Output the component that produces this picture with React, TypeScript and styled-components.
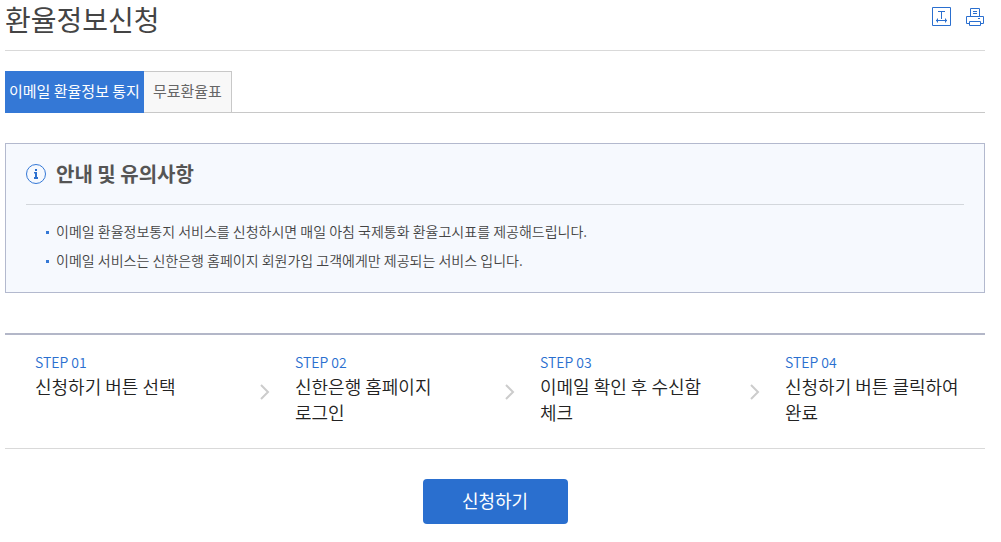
import React from "react";
import styled, { createGlobalStyle } from "styled-components";

const GlobalStyle = createGlobalStyle`
  *, *::before, *::after { box-sizing: border-box; }
  body {
    margin: 0;
    background: #fff;
    color: #222;
    font-family: "Noto Sans CJK KR", "Noto Sans", sans-serif;
    font-size: 14px;
  }
  h1, h2, p, ul, ol { margin: 0; padding: 0; }
  ul, ol { list-style: none; }
`;

const Page = styled.main`
  padding: 0 16px 18px 5px;
`;

const Header = styled.header`
  display: flex;
  justify-content: space-between;
  align-items: flex-start;
  height: 51px;
  border-bottom: 1px solid #d9d9d9;
`;

const Title = styled.h1`
  color: #444;
  font-size: 28px;
  font-weight: 400;
  line-height: 38px;
`;

const Tools = styled.div`
  display: flex;
  gap: 15px;
  padding-top: 7px;
`;

const ToolButton = styled.button`
  display: block;
  padding: 0;
  border: 0;
  background: none;
  cursor: pointer;

  svg { display: block; }
`;

const Tabs = styled.nav`
  display: flex;
  margin-top: 20px;
  height: 42px;
  border-bottom: 1px solid #c8c8c8;
`;

const Tab = styled.a<{ $active?: boolean }>`
  height: 42px;
  padding: ${(p) => (p.$active ? "0 4px" : "0 9px")};
  border: 1px solid ${(p) => (p.$active ? "#3478d6" : "#c8c8c8")};
  border-width: ${(p) => (p.$active ? "1px 0" : "1px 1px 1px 0")};
  background: ${(p) => (p.$active ? "#3478d6" : "#f8f8f8")};
  color: ${(p) => (p.$active ? "#fff" : "#666")};
  font-size: 15px;
  line-height: 38px;
  text-decoration: none;
  white-space: nowrap;
`;

const Notice = styled.section`
  margin-top: 30px;
  padding: 0 20px 17px;
  border: 1px solid #b3b9ce;
  background: #f6f9fe;
`;

const NoticeHead = styled.div`
  display: flex;
  align-items: center;
  gap: 10px;
  height: 61px;
  border-bottom: 1px solid #d3d7dc;
`;

const NoticeTitle = styled.h2`
  color: #555;
  font-size: 20px;
  font-weight: 700;
  line-height: 30px;
`;

const NoticeList = styled.ul`
  padding: 12px 0 0 20px;
`;

const NoticeItem = styled.li`
  display: flex;
  align-items: center;
  gap: 7px;
  color: #444;
  font-size: 14px;
  font-weight: 350;
  line-height: 29px;

  &::before {
    content: "";
    width: 3px;
    height: 3px;
    margin-top: 2px;
    background: #3478d6;
  }
`;

const Steps = styled.ol`
  display: grid;
  grid-template-columns: repeat(4, 1fr);
  margin-top: 40px;
  min-height: 116px;
  border-top: 2px solid #b3b7c8;
  border-bottom: 1px solid #d9d9d9;
`;

const Step = styled.li`
  display: flex;
  gap: 25px;
  padding: 16px 0 20px 10px;

  &:first-child { padding-left: 30px; }
`;

const Arrow = styled.svg`
  flex: none;
  margin-top: 32px;
`;

const StepNumber = styled.p`
  color: #2a6fcf;
  font-size: 14px;
  font-weight: 350;
  line-height: 22px;
`;

const StepText = styled.p`
  font-size: 18px;
  font-weight: 350;
  line-height: 26px;
`;

const Actions = styled.div`
  display: flex;
  justify-content: center;
  margin-top: 30px;
`;

const ApplyButton = styled.button`
  width: 145px;
  height: 45px;
  padding: 0 0 3px;
  border: 0;
  border-radius: 4px;
  background: #2a6fcf;
  color: #fff;
  font-family: inherit;
  font-size: 18px;
  line-height: 42px;
  cursor: pointer;
`;

const steps = [
  ["신청하기 버튼 선택"],
  ["신한은행 홈페이지", "로그인"],
  ["이메일 확인 후 수신함", "체크"],
  ["신청하기 버튼 클릭하여", "완료"],
];

const notices = [
  "이메일 환율정보통지 서비스를 신청하시면 매일 아침 국제통화 환율고시표를 제공해드립니다.",
  "이메일 서비스는 신한은행 홈페이지 회원가입 고객에게만 제공되는 서비스 입니다.",
];

const TextSizeIcon = () => (
  <svg width="19" height="19" viewBox="0 0 19 19" fill="none" stroke="#2a6fcf" aria-hidden="true">
    <path d="M.5 .5h18v18H.5zM6 4.5h7M9.5 4.5V12M4 13.5h11" />
    <path d="M5.5 11.5v4M13.5 11.5v4" />
    <path d="M4.5 12.5v2M14.5 12.5v2" opacity=".45" />
  </svg>
);

const PrintIcon = () => (
  <svg width="19" height="19" viewBox="0 0 19 19" fill="none" stroke="#2a6fcf" aria-hidden="true">
    <path d="M4.5 9V1.500h9V9M7 4.500h4M7 6.500h4" />
    <path d="M3.500 16.500h-3v-7h17v7h-3M12 11.500h2M3.500 14.500h11v4h-11z" />
  </svg>
);

const InfoIcon = () => (
  <svg width="20" height="20" viewBox="0 0 20 20" fill="none" aria-hidden="true">
    <circle cx="10" cy="10" r="9.5" stroke="#3478d6" />
    <path d="M9 5h2v2H9zM8 8h3v5h1v2H8v-2h1V9.500H8z" fill="#2a6fcf" />
  </svg>
);

export default function App() {
  return (
    <>
      <GlobalStyle />
      <Page>
        <Header>
          <Title>환율정보신청</Title>
          <Tools>
            <ToolButton type="button" aria-label="글자 크기">
              <TextSizeIcon />
            </ToolButton>
            <ToolButton type="button" aria-label="인쇄">
              <PrintIcon />
            </ToolButton>
          </Tools>
        </Header>

        <Tabs>
          <Tab href="#email" $active aria-current="page">이메일 환율정보 통지</Tab>
          <Tab href="#table">무료환율표</Tab>
        </Tabs>

        <Notice>
          <NoticeHead>
            <InfoIcon />
            <NoticeTitle>안내 및 유의사항</NoticeTitle>
          </NoticeHead>
          <NoticeList>
            {notices.map((text) => (
              <NoticeItem key={text}>{text}</NoticeItem>
            ))}
          </NoticeList>
        </Notice>

        <Steps>
          {steps.map((lines, i) => (
            <Step key={i}>
              {i > 0 && (
                <Arrow width="10" height="18" viewBox="0 0 10 18" fill="none" aria-hidden="true">
                  <path d="M1 2l7 7-7 7" stroke="#ccc" strokeWidth="2" />
                </Arrow>
              )}
              <div>
                <StepNumber>STEP 0{i + 1}</StepNumber>
                {lines.map((line) => (
                  <StepText key={line}>{line}</StepText>
                ))}
              </div>
            </Step>
          ))}
        </Steps>

        <Actions>
          <ApplyButton type="button">신청하기</ApplyButton>
        </Actions>
      </Page>
    </>
  );
}
